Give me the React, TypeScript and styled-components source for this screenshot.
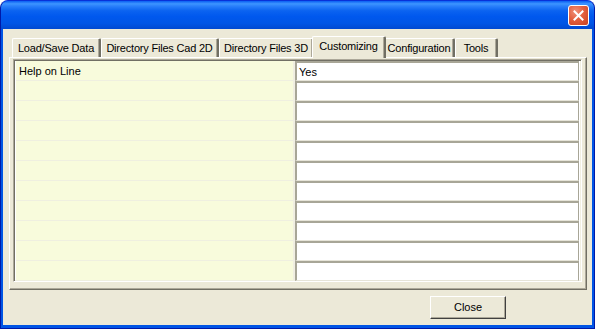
import React from "react";
import styled, { createGlobalStyle } from "styled-components";

const GlobalStyle = createGlobalStyle`
  html, body { margin: 0; padding: 0; background: #ffffff; }
  body { font-family: Tahoma, "Liberation Sans", "DejaVu Sans", sans-serif; font-size: 11px; }
`;

const Window = styled.div`
  width: 595px;
  height: 329px;
  box-sizing: border-box;
  display: flex;
  flex-direction: column;
  border-radius: 8px 8px 0 0;
  background: #0055e5;
  border: 1px solid #0019a8;
  border-top-color: #0831d9;
  overflow: hidden;
`;

const TitleBar = styled.div`
  height: 28px;
  flex: none;
  display: flex;
  align-items: center;
  justify-content: flex-end;
  padding-right: 5px;
  background: linear-gradient(
    to bottom,
    #0a5ef3 0%,
    #3d95ff 10%,
    #2a80fb 18%,
    #0b63f0 35%,
    #0058ee 55%,
    #0055e5 80%,
    #0049d1 100%
  );
`;

const CloseButton = styled.button`
  width: 21px;
  height: 21px;
  padding: 0;
  margin-top: 1px;
  border: 1px solid #ffffff;
  border-radius: 3px;
  background: radial-gradient(circle at 35% 30%, #f0917a 0%, #e3603f 45%, #c9411f 100%);
  display: flex;
  align-items: center;
  justify-content: center;
`;

const Frame = styled.div`
  flex: 1;
  display: flex;
  padding: 0 2px 3px 2px;
  min-height: 0;
`;

const Client = styled.div`
  flex: 1;
  background: #ece9d8;
  display: flex;
  flex-direction: column;
  padding: 6px 5px 0 6px;
  min-height: 0;
`;

const TabStrip = styled.div`
  display: flex;
  align-items: flex-end;
  height: 22px;
  padding-left: 3px;
  position: relative;
  z-index: 1;
`;

const Tab = styled.div<{ $active?: boolean; $w: number }>`
  box-sizing: border-box;
  width: ${(p) => p.$w}px;
  height: ${(p) => (p.$active ? 22 : 19)}px;
  margin: ${(p) => (p.$active ? "0 -2px -1px -2px" : "0")};
  padding-bottom: ${(p) => (p.$active ? 3 : 0)}px;
  border-top: 1px solid #ffffff;
  border-left: 1px solid #ffffff;
  border-right: 2px solid #716f64;
  box-shadow: inset -1px 0 0 #aca899;
  border-radius: 2px 2px 0 0;
  background: #ece9d8;
  color: #000000;
  display: flex;
  align-items: center;
  justify-content: center;
  white-space: nowrap;
  font-size: 11px;
  letter-spacing: -0.2px;
  position: relative;
  z-index: ${(p) => (p.$active ? 2 : 1)};
`;

const Panel = styled.div`
  box-sizing: border-box;
  height: 233px;
  flex: none;
  background: #ece9d8;
  border-top: 1px solid #ffffff;
  border-left: 1px solid #ffffff;
  border-right: 1px solid #716f64;
  border-bottom: 1px solid #716f64;
  box-shadow: inset -1px -1px 0 #aca899;
  padding: 1px 4px 7px 3px;
  display: flex;
`;

const Grid = styled.div`
  flex: 1;
  box-sizing: border-box;
  border-top: 1px solid #aca899;
  border-left: 1px solid #aca899;
  border-right: 1px solid #ffffff;
  border-bottom: 1px solid #ffffff;
  box-shadow: inset 1px 1px 0 #716f64, inset -1px -1px 0 #f1efe2;
  padding: 1px 2px 2px 2px;
  background: #ffffff;
  display: grid;
  grid-template-columns: 279px 1fr;
  grid-auto-rows: 20px;
  align-content: start;
`;

const LabelCell = styled.div`
  box-sizing: border-box;
  background: #f8fbdc;
  border-bottom: 1px solid #efefe0;
  border-right: 2px solid #f1efe2;
  padding-left: 3px;
  display: flex;
  align-items: center;
  color: #000000;
  white-space: nowrap;
`;

const ValueCell = styled.div`
  box-sizing: border-box;
  background: #ffffff;
  border-top: 2px solid #a8a697;
  border-left: 2px solid #a8a697;
  border-right: 1px solid #a8a697;
  border-bottom: 1px solid #e6e4d8;
  padding-left: 2px;
  display: flex;
  align-items: center;
  color: #000000;
  white-space: nowrap;
`;

const Footer = styled.div`
  flex: 1;
  display: flex;
  justify-content: flex-end;
  align-items: flex-start;
  padding-top: 6px;
  padding-right: 81px;
`;

const Button = styled.button`
  width: 76px;
  height: 23px;
  box-sizing: border-box;
  background: #ece9d8;
  border: 1px solid;
  border-color: #ffffff #404040 #404040 #ffffff;
  box-shadow: inset -1px -1px 0 #aca899;
  font-family: Tahoma, "Liberation Sans", "DejaVu Sans", sans-serif;
  font-size: 11px;
  color: #000000;
  padding: 0 0 1px 0;
`;

const tabs: { label: string; w: number; active?: boolean }[] = [
  { label: "Load/Save Data", w: 89 },
  { label: "Directory Files Cad 2D", w: 118 },
  { label: "Directory Files 3D", w: 95 },
  { label: "Customizing", w: 74, active: true },
  { label: "Configuration", w: 71 },
  { label: "Tools", w: 43 },
];

const rows: [string, string][] = [
  ["Help on Line", "Yes"],
  ...Array.from({ length: 10 }, () => ["", ""] as [string, string]),
];

export default function App() {
  return (
    <>
      <GlobalStyle />
      <Window>
        <TitleBar>
          <CloseButton aria-label="Close">
            <svg width="11" height="11" viewBox="0 0 11 11">
              <path d="M1.5 1.5 L9.5 9.5 M9.5 1.5 L1.5 9.5" stroke="#ffffff" strokeWidth="2" strokeLinecap="square" />
            </svg>
          </CloseButton>
        </TitleBar>
        <Frame>
          <Client>
            <TabStrip>
              {tabs.map((t) => (
                <Tab key={t.label} $w={t.w} $active={t.active}>
                  {t.label}
                </Tab>
              ))}
            </TabStrip>
            <Panel>
              <Grid>
                {rows.map(([label, value], i) => (
                  <React.Fragment key={i}>
                    <LabelCell>{label}</LabelCell>
                    <ValueCell>{value}</ValueCell>
                  </React.Fragment>
                ))}
              </Grid>
            </Panel>
            <Footer>
              <Button>Close</Button>
            </Footer>
          </Client>
        </Frame>
      </Window>
    </>
  );
}
